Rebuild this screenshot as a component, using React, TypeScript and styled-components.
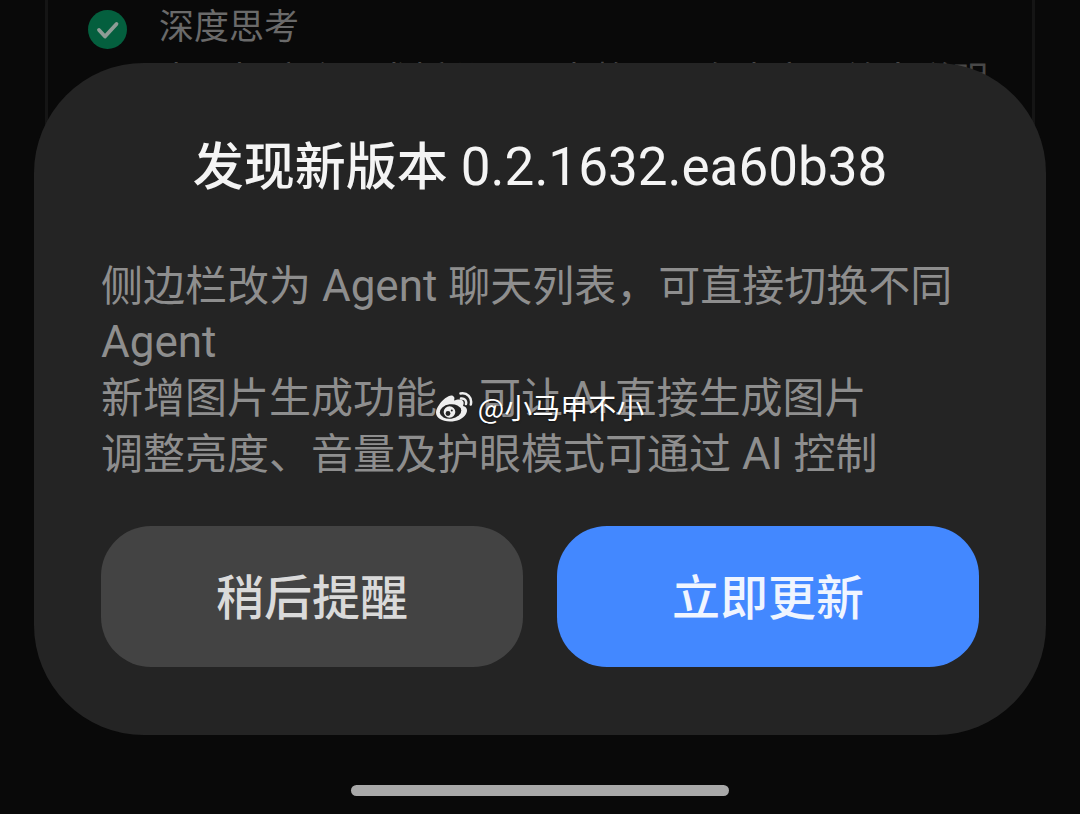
import React from "react";
import styled, { createGlobalStyle } from "styled-components";

const GlobalStyle = createGlobalStyle`
  * { box-sizing: border-box; }
  body {
    margin: 0;
    background: #090909;
    font-family: Roboto, "Noto Sans CJK SC", sans-serif;
  }
`;

const Screen = styled.div`
  position: relative;
  min-height: 100vh;
  overflow: hidden;
  display: flex;
  flex-direction: column;
  justify-content: flex-end;
  padding: 62px 34px 0;
`;

const Thread = styled.section`
  position: absolute;
  inset: 0 45px auto;
  height: 220px;
  padding: 0 40px;
  border: solid #151515;
  border-width: 0 3px;
  color: #6a6a6a;
`;

const Step = styled.div`
  display: flex;
  align-items: center;
  gap: 32px;
  height: 58px;
  font-size: 35px;
  line-height: 56px;
  svg { flex: none; }
  span { height: 58px; }
`;

const Thought = styled.p`
  margin: 0 0 0 72px;
  font-size: 36px;
  line-height: 46px;
  white-space: nowrap;
  color: #484848;
`;

const Dialog = styled.main`
  position: relative;
  padding: 73px 67px 68px;
  border-radius: 110px;
  background: #242424;
`;

const Title = styled.h1`
  margin: 0;
  text-align: center;
  font-size: 51px;
  line-height: 64px;
  font-weight: 500;
  color: #f4f4f4;
  white-space: nowrap;
`;

const Version = styled.span`
  font-size: 53px;
  line-height: 1;
  font-weight: 400;
`;

const Notes = styled.div`
  margin: 59px 0 43px;
  font-size: 42px;
  line-height: 56px;
  color: #8e8e8e;
  text-autospace: normal;
  p { margin: 0; }
`;

const Latin = styled.span`
  font-size: 44px;
  line-height: 1;
`;

const Actions = styled.div`
  display: grid;
  grid-template-columns: 1fr 1fr;
  gap: 34px;
`;

const Action = styled.button<{ $primary?: boolean }>`
  height: 141px;
  padding: 0 0 6px;
  border: 0;
  border-radius: 50px;
  font: inherit;
  font-size: 48px;
  font-weight: 500;
  color: ${(p) => (p.$primary ? "#f0f5ff" : "#dadada")};
  background: ${(p) => (p.$primary ? "#4388ff" : "#434343")};
`;

const HomeArea = styled.footer`
  display: flex;
  justify-content: center;
  padding: 50px 0 18px;
`;

const HomeBar = styled.div`
  width: 378px;
  height: 11px;
  border-radius: 6px;
  background: #a9a9a9;
`;

const Watermark = styled.div`
  position: absolute;
  top: 324px;
  left: 0;
  right: 0;
  display: flex;
  align-items: center;
  justify-content: center;
  gap: 5px;
  font-family: "Noto Sans CJK SC", sans-serif;
  font-size: 28px;
  line-height: 40px;
  color: #fff;
  text-shadow: 0 1px 2px #0008;
`;

const CheckIcon = () => (
  <svg width="39" height="39" viewBox="0 0 39 39" aria-hidden="true">
    <circle cx="19.5" cy="19.5" r="19.5" fill="#045f3e" />
    <path d="M11 20l6 6.500L28.500 14" fill="none" stroke="#8e9c96" strokeWidth="3.800" strokeLinecap="round" strokeLinejoin="round" />
  </svg>
);

const WeiboIcon = () => (
  <svg width="37" height="32" viewBox="0 0 37 32" aria-hidden="true">
    <path d="M3 14C7 8 14 3 17 5c2 1 1.500 3 1 4.500 3-1 7-2 9 .500 1.200 1.500.5 3.500 0 5C31 16 32 19 30 23c-3 5-9 7.500-16 7.500C6 30.500 0 27 0 21.500 0 19 1 17 3 14Z" fill="#efefef" />
    <ellipse cx="14.500" cy="20.500" rx="10.800" ry="7.200" transform="rotate(-7 14.500 20.500)" fill="#242424" />
    <circle cx="13.500" cy="21" r="5.800" fill="#efefef" />
    <circle cx="12" cy="22.500" r="2.400" fill="#242424" />
    <circle cx="15.800" cy="19.600" r="1" fill="#242424" />
    <path d="M25 7.500c3.500-.5 5.800 2 5 5.500M24.500 2.500C31 1.200 36.500 6.500 34.800 13.500" fill="none" stroke="#efefef" strokeWidth="2.500" strokeLinecap="round" />
  </svg>
);

export default function App() {
  return (
    <>
      <GlobalStyle />
      <Screen>
        <Thread>
          <Step>
            <CheckIcon />
            <span>深度思考</span>
          </Step>
          <Thought>为了把这个需求拆分开，先整理现有内容再给出说明</Thought>
        </Thread>
        <Dialog role="dialog" aria-labelledby="update-title">
          <Title id="update-title">
            发现新版本<Version> 0.2.1632.ea60b38</Version>
          </Title>
          <Notes>
            <p>侧边栏改为<Latin> Agent </Latin>聊天列表，可直接切换不同<Latin> Agent</Latin></p>
            <p>新增图片生成功能，可让<Latin>AI</Latin>直接生成图片</p>
            <p>调整亮度、音量及护眼模式可通过<Latin> AI </Latin>控制</p>
          </Notes>
          <Actions>
            <Action type="button">稍后提醒</Action>
            <Action type="button" $primary>立即更新</Action>
          </Actions>
          <Watermark>
            <WeiboIcon />
            <span>@小马甲不小</span>
          </Watermark>
        </Dialog>
        <HomeArea>
          <HomeBar />
        </HomeArea>
      </Screen>
    </>
  );
}
